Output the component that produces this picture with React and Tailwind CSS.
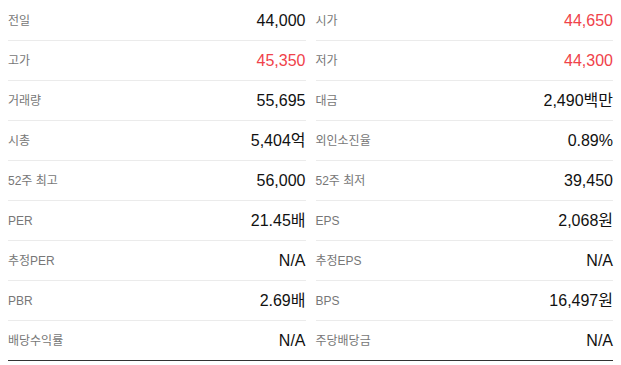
const rows = [
  [['전일', '44,000'], ['시가', '44,650', true]],
  [['고가', '45,350', true], ['저가', '44,300', true]],
  [['거래량', '55,695'], ['대금', '2,490백만']],
  [['시총', '5,404억'], ['외인소진율', '0.89%']],
  [['52주 최고', '56,000'], ['52주 최저', '39,450']],
  [['PER', '21.45배'], ['EPS', '2,068원']],
  [['추정PER', 'N/A'], ['추정EPS', 'N/A']],
  [['PBR', '2.69배'], ['BPS', '16,497원']],
  [['배당수익률', 'N/A'], ['주당배당금', 'N/A']],
]

function Cell({ label, value, red, last }) {
  return (
    <div
      className={
        'flex items-center justify-between ' +
        (last ? 'h-[39px]' : 'h-10 border-b border-[#ebebeb]')
      }
    >
      <span className="text-[12px] text-[#777]">{label}</span>
      <span className={'text-[16px] ' + (red ? 'text-[#f0424a]' : 'text-[#111]')}>{value}</span>
    </div>
  )
}

export default function App() {
  return (
    <div
      className="w-[621px] h-[365px] bg-white px-2"
      style={{ fontFamily: '"Liberation Sans", "Noto Sans CJK KR", sans-serif' }}
    >
      <div className="grid grid-cols-2 gap-x-[10px] pt-px border-b border-[#333]">
        {rows.map((row, i) =>
          row.map(([label, value, red], j) => (
            <Cell key={i + '-' + j} label={label} value={value} red={red} last={i === rows.length - 1} />
          ))
        )}
      </div>
    </div>
  )
}
